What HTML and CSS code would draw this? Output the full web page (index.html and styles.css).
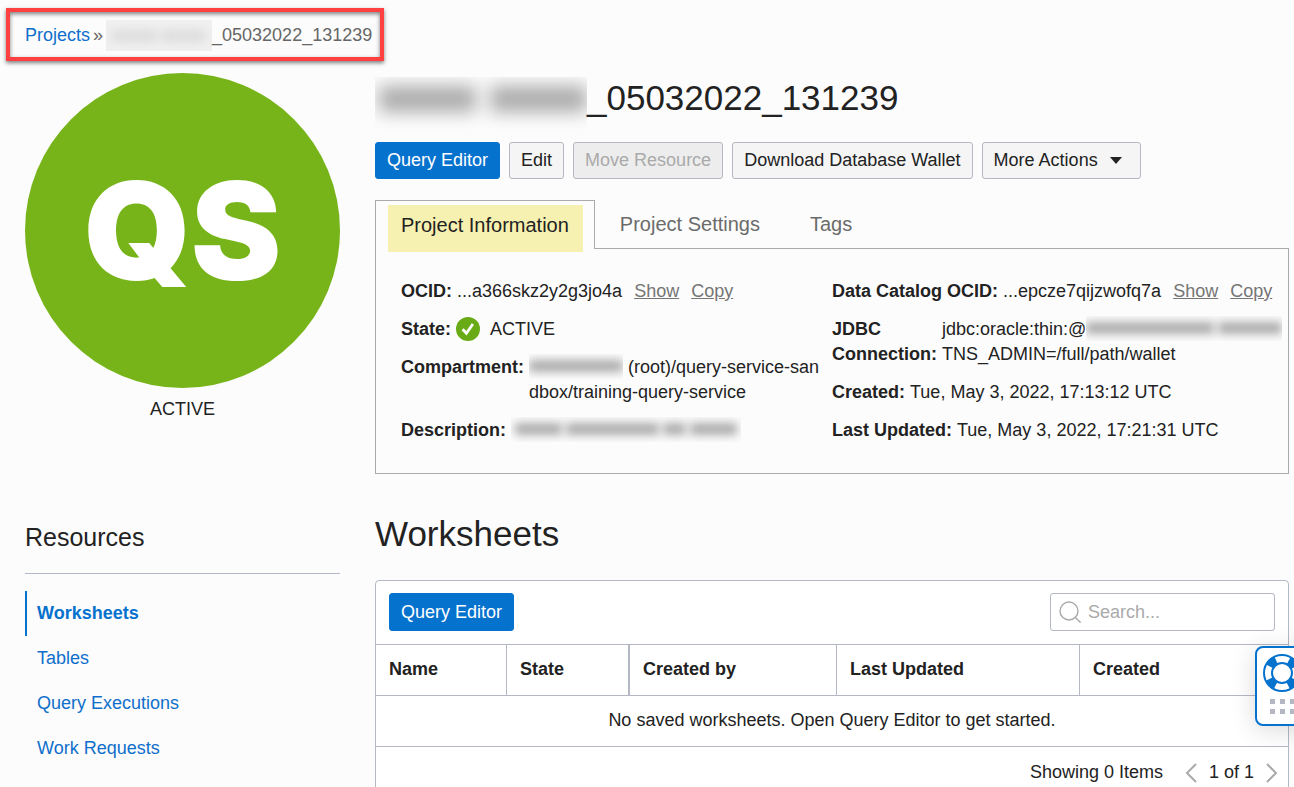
FILE: index.html
```html
<!DOCTYPE html>
<html lang="en">
<head>
<meta charset="utf-8">
<title>Project details</title>
<link rel="stylesheet" href="styles.css">
</head>
<body>
<div class="page">
  <nav class="breadcrumb" aria-label="Breadcrumb">
    <a href="#">Projects</a>
    <span class="sep">»</span>
    <span class="crumb"><span class="redact redact-crumb" aria-hidden="true"><i></i><i></i></span>_05032022_131239</span>
  </nav>

  <div class="layout">
    <aside class="side">
      <div class="badge">QS</div>
      <p class="badge-state">ACTIVE</p>
      <h2 class="side-title">Resources</h2>
      <ul class="side-nav">
        <li><a class="current" href="#">Worksheets</a></li>
        <li><a href="#">Tables</a></li>
        <li><a href="#">Query Executions</a></li>
        <li><a href="#">Work Requests</a></li>
      </ul>
    </aside>

    <main class="main">
      <h1 class="title"><span class="redact redact-title" aria-hidden="true"><i></i><i></i></span>_05032022_131239</h1>

      <div class="actions">
        <button class="btn primary" type="button">Query Editor</button>
        <button class="btn" type="button">Edit</button>
        <button class="btn" type="button" disabled>Move Resource</button>
        <button class="btn" type="button">Download Database Wallet</button>
        <button class="btn more" type="button">More Actions
          <svg width="12" height="7" viewBox="0 0 12 7" aria-hidden="true"><path d="M0 0h12L6 7z" fill="#222"/></svg>
        </button>
      </div>

      <div class="tabs" role="tablist">
        <button class="tab active" type="button" role="tab" aria-selected="true"><span class="mark">Project Information</span></button>
        <button class="tab" type="button" role="tab" aria-selected="false">Project Settings</button>
        <button class="tab" type="button" role="tab" aria-selected="false">Tags</button>
      </div>

      <section class="panel">
        <dl class="facts facts-left">
          <div class="fact"><dt>OCID:</dt><dd>...a366skz2y2g3jo4a <a href="#">Show</a> <a href="#">Copy</a></dd></div>
          <div class="fact"><dt>State:</dt><dd class="state">
            <svg width="24" height="24" viewBox="0 0 24 24" aria-hidden="true"><circle cx="12" cy="12" r="12" fill="#68ab17"/><path d="M6.6 12.2l3.8 4L16.9 7" fill="none" stroke="#fff" stroke-width="2.8"/></svg>
            ACTIVE</dd></div>
          <div class="fact"><dt>Compartment:</dt><dd class="path"><span class="redact redact-root" aria-hidden="true"><i></i></span> (root)/query-service-sandbox/training-query-service</dd></div>
          <div class="fact"><dt>Description:</dt><dd><span class="redact redact-desc" aria-hidden="true"><i></i><i></i><i></i><i></i></span></dd></div>
        </dl>
        <dl class="facts">
          <div class="fact"><dt>Data Catalog OCID:</dt><dd>...epcze7qijzwofq7a <a href="#">Show</a> <a href="#">Copy</a></dd></div>
          <div class="fact"><dt class="narrow">JDBC Connection:</dt><dd class="jdbc">jdbc:oracle:thin:@<span class="redact redact-jdbc" aria-hidden="true"><i></i><i></i></span><br>TNS_ADMIN=/full/path/wallet</dd></div>
          <div class="fact"><dt>Created:</dt><dd>Tue, May 3, 2022, 17:13:12 UTC</dd></div>
          <div class="fact"><dt>Last Updated:</dt><dd>Tue, May 3, 2022, 17:21:31 UTC</dd></div>
        </dl>
      </section>

      <h2 class="section-title">Worksheets</h2>

      <section class="card">
        <div class="toolbar">
          <button class="btn primary" type="button">Query Editor</button>
          <label class="search">
            <svg width="22" height="22" viewBox="0 0 22 22" aria-hidden="true"><g fill="none" stroke="#aaa" stroke-width="1.4"><circle cx="10" cy="10" r="9"/><path d="M16.2 16.2l5.4 5.4"/></g></svg>
            <input type="search" placeholder="Search..." aria-label="Search">
          </label>
        </div>
        <table class="grid">
          <thead>
            <tr><th class="c-name">Name</th><th class="c-state">State</th><th class="c-by">Created by</th><th class="c-updated">Last Updated</th><th>Created</th></tr>
          </thead>
          <tbody>
            <tr><td colspan="5">No saved worksheets. Open Query Editor to get started.</td></tr>
          </tbody>
        </table>
        <div class="pager">
          <span>Showing 0 Items</span>
          <button type="button" aria-label="Previous page"><svg width="12" height="20" viewBox="0 0 12 20"><path d="M11 1L2 10l9 9" fill="none" stroke="#aaa" stroke-width="2"/></svg></button>
          <span>1 of 1</span>
          <button type="button" aria-label="Next page"><svg width="12" height="20" viewBox="0 0 12 20"><path d="M1 1l9 9-9 9" fill="none" stroke="#aaa" stroke-width="2"/></svg></button>
        </div>
      </section>
    </main>
  </div>
</div>

<button class="help" type="button" aria-label="Help">
  <svg width="38" height="38" viewBox="0 0 38 38" aria-hidden="true">
    <circle cx="19" cy="19" r="14" fill="none" stroke="#0572ce" stroke-width="9" stroke-dasharray="9 12.99" stroke-dashoffset="-6.5"/>
    <circle cx="19" cy="19" r="18" fill="none" stroke="#0572ce" stroke-width="2"/>
    <circle cx="19" cy="19" r="10" fill="#fff" stroke="#0572ce" stroke-width="2"/>
  </svg>
  <svg width="25" height="15" viewBox="0 0 25 15" aria-hidden="true"><path d="M0 0h5v5H0zM10 0h5v5h-5zM20 0h5v5h-5zM0 10h5v5H0zM10 10h5v5h-5zM20 10h5v5h-5z" fill="#b3b8c2"/></svg>
</button>
</body>
</html>
```
FILE: styles.css
```css
* { box-sizing: border-box; }

body {
  margin: 0;
  background: #fcfcfc;
  color: #222;
  font: 18px/25px "Liberation Sans", Arial, sans-serif;
}

h1, h2, p, dl, dd, ul { margin: 0; padding: 0; }
h1, h2 { font-weight: 400; }
ul { list-style: none; }
button, input { font: inherit; color: inherit; }
svg { display: block; flex: none; }
a { color: #0f6fcb; text-decoration: none; }

.page {
  height: 100vh;
  overflow-y: auto;
  scrollbar-width: none;
  padding: 8px 5px 0 6px;
}

.breadcrumb {
  display: flex;
  gap: 3px;
  width: fit-content;
  padding: 11px 8px 9px 15px;
  border: 4px solid #fe4040;
  box-shadow: 0 2px 4px rgba(0, 0, 0, .5), inset 0 2px 4px rgba(0, 0, 0, .5);
  color: #666;
}
.crumb { display: flex; }

.layout {
  display: grid;
  grid-template-columns: 315px minmax(0, 1fr);
  gap: 35px;
  padding: 12px 0 0 19px;
}

/* Hidden values */
.redact {
  display: inline-flex;
  align-items: center;
  overflow: hidden;
  vertical-align: middle;
  gap: 4px;
  padding: 0 6px;
}
.redact i { flex: 1; height: 12px; background: #aaa; filter: blur(5px); }
.redact-crumb { width: 106px; height: 31px; margin: -3px 0; background: #f0f0f0; }
.redact-crumb i { background: #ddd; }
.redact-title { width: 212px; height: 52px; gap: 14px; padding: 0 0 8px 4px; }
.redact-title i { height: 26px; background: #aaa; filter: blur(9px); }
.redact-root { width: 94px; height: 25px; padding: 0; margin: -4px 0 0; }
.redact-desc { width: 230px; height: 25px; margin: -4px 0 0; padding: 0 4px; }
.redact-desc i:nth-child(2) { flex-grow: 2; }
.redact-desc i:nth-child(3) { flex-grow: .5; }
.redact-jdbc { width: 196px; height: 25px; margin: -4px 0 0; padding: 0; }
.redact-jdbc i:first-child { flex-grow: 2; }

/* Left column */
.badge {
  display: flex;
  align-items: center;
  justify-content: center;
  aspect-ratio: 1;
  border-radius: 50%;
  background: #77b419;
  color: #fff;
  font: 900 136px/1 Inter, sans-serif;
}
.badge-state { margin-top: 9px; text-align: center; }
.side-title {
  margin-top: 98px;
  padding: 0 0 18px;
  border-bottom: 1px solid #b3b8c8;
  font-size: 25px;
  line-height: 35px;
}
.side-nav { margin-top: 17px; }
.side-nav a { display: block; padding: 10px 0 10px 10px; border-left: 2px solid transparent; }
.side-nav .current { border-color: #0572ce; color: #0572ce; font-weight: 700; }

/* Header */
.title { display: flex; margin-top: 4px; font-size: 35px; line-height: 42px; height: 65px; }
.actions { display: flex; flex-wrap: wrap; gap: 9px; }
.btn {
  padding: 5px 11px;
  border: 1px solid #b3b8c2;
  border-radius: 3px;
  background: #f5f5f5;
}
.btn.primary { border-color: #0572ce; background: #0572ce; color: #fff; }
.btn:disabled { background: #ededed; color: #aaa; }
.more { display: flex; align-items: center; gap: 12px; padding-right: 18px; }

.tabs { display: flex; margin-top: 21px; }
.tab {
  padding: 0 25px;
  border: 0;
  border-bottom: 1px solid #aaa;
  background: none;
  color: #6b6b6b;
  font-size: 20px;
  line-height: 48px;
}
.tab:last-child { flex: 1; text-align: left; }
.tab.active {
  position: relative;
  display: flex;
  align-items: flex-start;
  padding: 4px 11px 0 12px;
  border: 1px solid #aaa;
  border-bottom: 0;
  color: #222;
}
.mark { display: block; margin-bottom: -4px; padding: 0 14px 6px 13px; background: #f7f1b1; line-height: 41px; }

.panel {
  display: grid;
  grid-template-columns: 1fr 1fr;
  padding: 30px 0;
  border: 1px solid #aaa;
  border-top: 0;
}
.facts { display: flex; flex-direction: column; gap: 13px; }
.facts-left { padding: 0 12px 0 25px; }
.fact { display: flex; gap: 5px; }
.fact dt { flex: none; font-weight: 700; }
.fact .narrow { width: min-content; }
.fact dd { min-width: 0; }
.fact dd a { margin-left: 7px; color: #757575; text-decoration: underline; }
.state { display: flex; gap: 10px; }
.path { word-break: break-all; }
.jdbc { white-space: nowrap; }

/* Worksheets */
.section-title { margin-top: 39px; font-size: 35px; line-height: 42px; }
.card { margin-top: 25px; border: 1px solid #b3b8c2; border-radius: 4px 4px 0 0; background: #fff; }
.toolbar { display: flex; justify-content: space-between; padding: 12px 13px 13px; }
.toolbar .btn { min-height: 38px; }
.search {
  display: flex;
  align-items: center;
  gap: 7px;
  width: 225px;
  padding: 0 8px;
  border: 1px solid #b3b8c2;
  border-radius: 3px;
}
.search input { width: 100%; min-width: 0; padding: 0; border: 0; outline: 0; background: none; }
.search input::placeholder { color: #aaa; }

.grid { width: 100%; border-spacing: 0; table-layout: fixed; }
.grid th, .grid td { padding: 12px 13px 13px; border-top: 1px solid #b3b8c2; }
.grid th { border-right: 1px solid #b3b8c2; text-align: left; }
.grid th:last-child { border-right: 0; }
.grid td { border-bottom: 1px solid #b3b8c2; text-align: center; }
.grid .c-name { width: 131px; }
.grid .c-state { width: 123px; border-right-width: 2px; }
.grid .c-by { width: 207px; }
.grid .c-updated { width: 243px; }

.pager { display: flex; align-items: center; justify-content: flex-end; gap: 12px; padding: 13px 10px; }
.pager button { padding: 0; margin-left: 10px; border: 0; background: none; }
.pager button:last-child { margin-left: 0; }

.help {
  position: fixed;
  right: -15px;
  bottom: 61px;
  display: flex;
  flex-direction: column;
  align-items: center;
  gap: 7px;
  width: 54px;
  height: 80px;
  padding: 6px 0 0;
  border: 2px solid #0572ce;
  border-radius: 8px;
  background: #fff;
  box-shadow: 0 4px 24px rgba(0, 0, 0, .15);
}
```
